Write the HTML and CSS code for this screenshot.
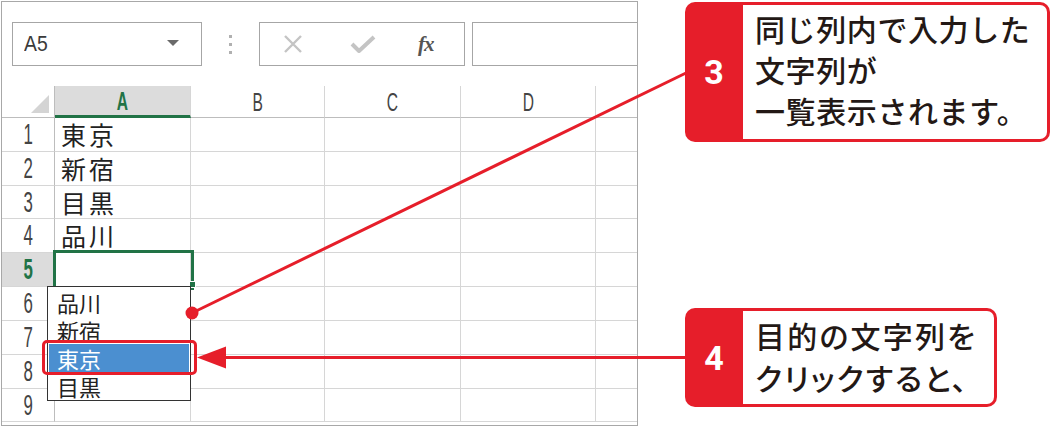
FILE: index.html
```html
<!DOCTYPE html>
<html lang="ja">
<head>
<meta charset="utf-8">
<link rel="stylesheet" href="styles.css">
</head>
<body>
<div class="page">
  <div class="excel">
    <div class="fbar">
      <div class="namebox"><span class="nb-text">A5</span><span class="nb-arrow"></span></div>
      <div class="sep"><i></i><i></i><i></i></div>
      <div class="btnbox">
        <svg class="ic" width="20" height="20" viewBox="0 0 20 20"><path d="M2 2 L18 18 M18 2 L2 18" stroke="#c4c4c4" stroke-width="2.4" fill="none"/></svg>
        <svg class="ic" width="26" height="18" viewBox="0 0 26 18"><path d="M2 9 L9 16 L24 2" stroke="#c4c4c4" stroke-width="4" fill="none" stroke-linejoin="round"/></svg>
        <span class="fx">fx</span>
      </div>
      <div class="inputbox"></div>
    </div>
    <div class="grid">
      <div class="corner"><span class="tri"></span></div>
      <div class="ch sel"><span class="n">A</span></div>
      <div class="ch"><span class="n">B</span></div>
      <div class="ch"><span class="n">C</span></div>
      <div class="ch"><span class="n">D</span></div>
      <div class="ch last"></div>

      <div class="rh"><span class="n">1</span></div><div class="c txt">東京</div><div class="c"></div><div class="c"></div><div class="c"></div><div class="c last"></div>
      <div class="rh"><span class="n">2</span></div><div class="c txt">新宿</div><div class="c"></div><div class="c"></div><div class="c"></div><div class="c last"></div>
      <div class="rh"><span class="n">3</span></div><div class="c txt">目黒</div><div class="c"></div><div class="c"></div><div class="c"></div><div class="c last"></div>
      <div class="rh"><span class="n">4</span></div><div class="c txt">品川</div><div class="c"></div><div class="c"></div><div class="c"></div><div class="c last"></div>
      <div class="rh sel"><span class="n">5</span></div><div class="c"></div><div class="c"></div><div class="c"></div><div class="c"></div><div class="c last"></div>
      <div class="rh"><span class="n">6</span></div><div class="c"></div><div class="c"></div><div class="c"></div><div class="c"></div><div class="c last"></div>
      <div class="rh"><span class="n">7</span></div><div class="c"></div><div class="c"></div><div class="c"></div><div class="c"></div><div class="c last"></div>
      <div class="rh"><span class="n">8</span></div><div class="c"></div><div class="c"></div><div class="c"></div><div class="c"></div><div class="c last"></div>
      <div class="rh"><span class="n">9</span></div><div class="c"></div><div class="c"></div><div class="c"></div><div class="c"></div><div class="c last"></div>

      <div class="cursor"></div>
      <div class="handle"></div>
      <ul class="dropdown">
        <li>品川</li>
        <li>新宿</li>
        <li class="hl">東京</li>
        <li>目黒</li>
      </ul>
      <div class="mark"></div>
    </div>
  </div>

  <div class="notes">
    <div class="callout c3">
      <div class="num">3</div>
      <div class="msg">同じ列内で入力した<br>文字列が<br>一覧表示されます。</div>
    </div>
    <div class="callout c4">
      <div class="num">4</div>
      <div class="msg">目的の文字列を<br>クリックすると、</div>
    </div>
  </div>

  <svg class="leaders" width="1051" height="427" viewBox="0 0 1051 427">
    <line x1="192" y1="313" x2="686" y2="73" stroke="#e61e2a" stroke-width="3"/>
    <circle cx="192" cy="313" r="6.5" fill="#e61e2a"/>
    <line x1="222" y1="357.5" x2="686" y2="357.5" stroke="#e61e2a" stroke-width="3"/>
    <polygon points="197,357.5 226,346.5 226,368.5" fill="#e61e2a"/>
  </svg>
</div>
</body>
</html>
```

FILE: styles.css
```css
* { box-sizing: border-box; }
html, body { margin: 0; padding: 0; background: #fff; }
body { width: 1051px; height: 427px; overflow: hidden; font-family: "Noto Sans CJK JP", sans-serif; }

.page { position: relative; display: flex; width: 1051px; height: 427px; }

.excel {
  margin: 1px 0 0 1px;
  width: 637px;
  height: 425px;
  border: 1px solid #a8a8a8;
  display: flex;
  flex-direction: column;
  overflow: hidden;
}

/* formula bar */
.fbar {
  height: 84px;
  flex: none;
  display: flex;
  align-items: flex-start;
  padding: 20px 0 0 10px;
}
.namebox {
  width: 190px;
  height: 44px;
  border: 1px solid #a6a6a6;
  display: flex;
  align-items: center;
  justify-content: space-between;
  padding: 0 22px 0 11px;
}
.nb-text {
  font-family: "Liberation Sans", sans-serif;
  font-size: 22px;
  color: #3a3a3a;
  display: inline-block;
  transform: scaleX(0.88);
  transform-origin: left center;
}
.nb-arrow {
  width: 0; height: 0;
  border-left: 6px solid transparent;
  border-right: 6px solid transparent;
  border-top: 6px solid #6a6a6a;
  margin-top: -3px;
}
.sep {
  width: 57px;
  height: 44px;
  display: flex;
  flex-direction: column;
  align-items: center;
  justify-content: center;
  gap: 5px;
}
.sep i { width: 3px; height: 3px; background: #b0b0b0; display: block; }
.btnbox {
  width: 206px;
  height: 44px;
  border: 1px solid #a6a6a6;
  display: flex;
  align-items: center;
  padding-left: 23px;
}
.btnbox .ic { display: block; }
.btnbox .ic:nth-child(2) { margin-left: 47px; }
.fx {
  margin-left: 42px;
  font-family: "Liberation Serif", serif;
  font-style: italic;
  font-weight: bold;
  font-size: 21px;
  color: #555;
  letter-spacing: -1px;
}
.inputbox {
  margin-left: 7px;
  flex: 1;
  height: 44px;
  border: 1px solid #a6a6a6;
  border-right: none;
}

/* grid */
.grid {
  position: relative;
  display: grid;
  grid-template-columns: 53px 136px 134px 136px 135px 1fr;
  grid-template-rows: 32px 34px 34px 33px 34px 34px 34px 34px 34px 33px;
}
.corner {
  position: relative;
  border-right: 1px solid #bdbdbd;
  border-bottom: 1px solid #bdbdbd;
}
.tri {
  position: absolute;
  left: 29px; top: 9px;
  width: 0; height: 0;
  border-left: 18px solid transparent;
  border-bottom: 18px solid #d4d4d4;
}
.ch {
  display: flex;
  align-items: center;
  justify-content: center;
  border-right: 1px solid #d6d6d6;
  border-bottom: 1px solid #bdbdbd;
  color: #444;
}
.ch.sel { background: #dcdcdc; border-bottom: 3px solid #217346; color: #217346; font-weight: bold; }
.ch.last, .c.last { border-right: none; }
.n {
  display: inline-block;
  font-family: "Liberation Sans", sans-serif;
  font-size: 26px;
  line-height: 1;
  transform: scaleX(0.6);
}
.rh {
  display: flex;
  align-items: center;
  justify-content: center;
  border-right: 1px solid #bdbdbd;
  border-bottom: 1px solid #d6d6d6;
  color: #444;
}
.rh .n { font-size: 29px; transform: scaleX(0.58); }
.rh.sel { background: #dcdcdc; color: #217346; font-weight: bold; }
.c {
  border-right: 1px solid #d6d6d6;
  border-bottom: 1px solid #d6d6d6;
}
.c.txt {
  display: flex;
  align-items: center;
  padding-left: 6px;
  font-size: 25px;
  letter-spacing: 3px;
  color: #222;
  line-height: 1;
}

.cursor {
  position: absolute;
  left: 51px; top: 164px;
  width: 141px; height: 40px;
  border: 3px solid #217346;
}
.handle {
  position: absolute;
  left: 187px; top: 195px;
  width: 7px; height: 7px;
  background: #217346;
  border: 1px solid #fff;
}
.dropdown {
  position: absolute;
  left: 45px; top: 200px;
  width: 144px; height: 115px;
  margin: 0;
  padding: 1px 1px 0 1px;
  list-style: none;
  background: #fff;
  border: 1px solid #333;
}
.dropdown li {
  height: 28px;
  line-height: 28px;
  padding-left: 8px;
  font-size: 19px;
  color: #222;
}
.dropdown li { font-size: 22px; }
.dropdown li.hl { background: #4b8fd0; color: #fff; }
.mark {
  position: absolute;
  left: 40px; top: 254px;
  width: 155px; height: 35px;
  border: 3px solid #e61e2a;
  border-radius: 5px;
}

/* callouts */
.notes {
  margin-left: 47px;
  display: flex;
  flex-direction: column;
}
.callout { display: flex; }
.c3 { margin-top: 2px; width: 365px; height: 140px; }
.c4 { margin-top: 166px; width: 312px; height: 99px; }
.num {
  width: 58px;
  flex: none;
  background: #e61e2a;
  border-radius: 10px 0 0 10px;
  display: flex;
  align-items: center;
  justify-content: center;
  color: #fff;
  font-family: Roboto, "Liberation Sans", sans-serif;
  font-weight: bold;
  font-size: 34px;
}
.msg {
  flex: 1;
  border: 3px solid #e61e2a;
  border-left: none;
  border-radius: 0 10px 10px 0;
  display: flex;
  align-items: center;
  padding: 0 0 5px 12px;
  font-family: "Noto Sans CJK JP", sans-serif;
  font-weight: 500;
  font-size: 30px;
  line-height: 41px;
  letter-spacing: 0.6px;
  white-space: nowrap;
  color: #231815;
}
.c4 .msg { line-height: 42px; letter-spacing: 2.2px; font-feature-settings: "palt"; padding-bottom: 4px; }

.leaders { position: absolute; left: 0; top: 0; pointer-events: none; }
```
